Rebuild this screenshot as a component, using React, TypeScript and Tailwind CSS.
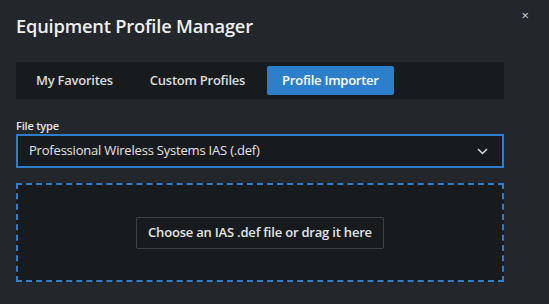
import React from 'react';

const tabs = ['My Favorites', 'Custom Profiles', 'Profile Importer'];

export default function App() {
  const active = 2;
  return (
    <div
      className="relative w-[549px] h-[304px] bg-[#23272b] text-[#e8e8e8] overflow-hidden"
      style={{ fontFamily: '"Open Sans", "Noto Sans", sans-serif' }}
    >
      <button className="absolute top-[9px] right-[20px] text-[13px] leading-none text-[#d8d8d8]">×</button>

      <div className="w-[488px] ml-4 pt-[12px]">
        <h1 className="text-[18.3px] font-semibold leading-[28px] tracking-[-0.2px] text-[#efefef]">
          Equipment Profile Manager
        </h1>

        <div className="mt-[22px] h-[37px] bg-[#181b1e] flex items-center px-[5px] gap-[7px]">
          {tabs.map((t, i) => (
            <div
              key={t}
              className={`h-[29px] flex items-center text-[13px] font-semibold tracking-[-0.25px] ${
                i === active ? 'bg-[#2e7fcb] text-white rounded-[2px] px-[15px]' : 'text-[#dcdcdc] px-[15px]'
              }`}
            >
              {t}
            </div>
          ))}
        </div>

        <label className="block mt-[20px] text-[11px] font-semibold leading-[13px] text-[#e4e4e4] tracking-[-0.2px]">
          File type
        </label>
        <div className="mt-[2px] h-[34px] border-2 border-[#2e7fcb] bg-[#181b1e] flex items-center justify-between pl-[11px] pr-[14px]">
          <span className="text-[13px] text-[#e4e4e4] tracking-[-0.2px]">Professional Wireless Systems IAS (.def)</span>
          <svg width="11" height="7" viewBox="0 0 11 7" fill="none">
            <path d="M1 1l4.5 4.5L10 1" stroke="#d8d8d8" strokeWidth="1.5" />
          </svg>
        </div>

        <div className="mt-[15px] h-[99px] border-2 border-dashed border-[#2e7fcb] bg-[#181b1e] flex items-center justify-center">
          <button className="h-[32px] px-[11px] border border-[#3d4045] rounded-[2px] text-[13px] font-semibold text-[#e4e4e4] tracking-[-0.2px]">
            Choose an IAS .def file or drag it here
          </button>
        </div>
      </div>
    </div>
  );
}
